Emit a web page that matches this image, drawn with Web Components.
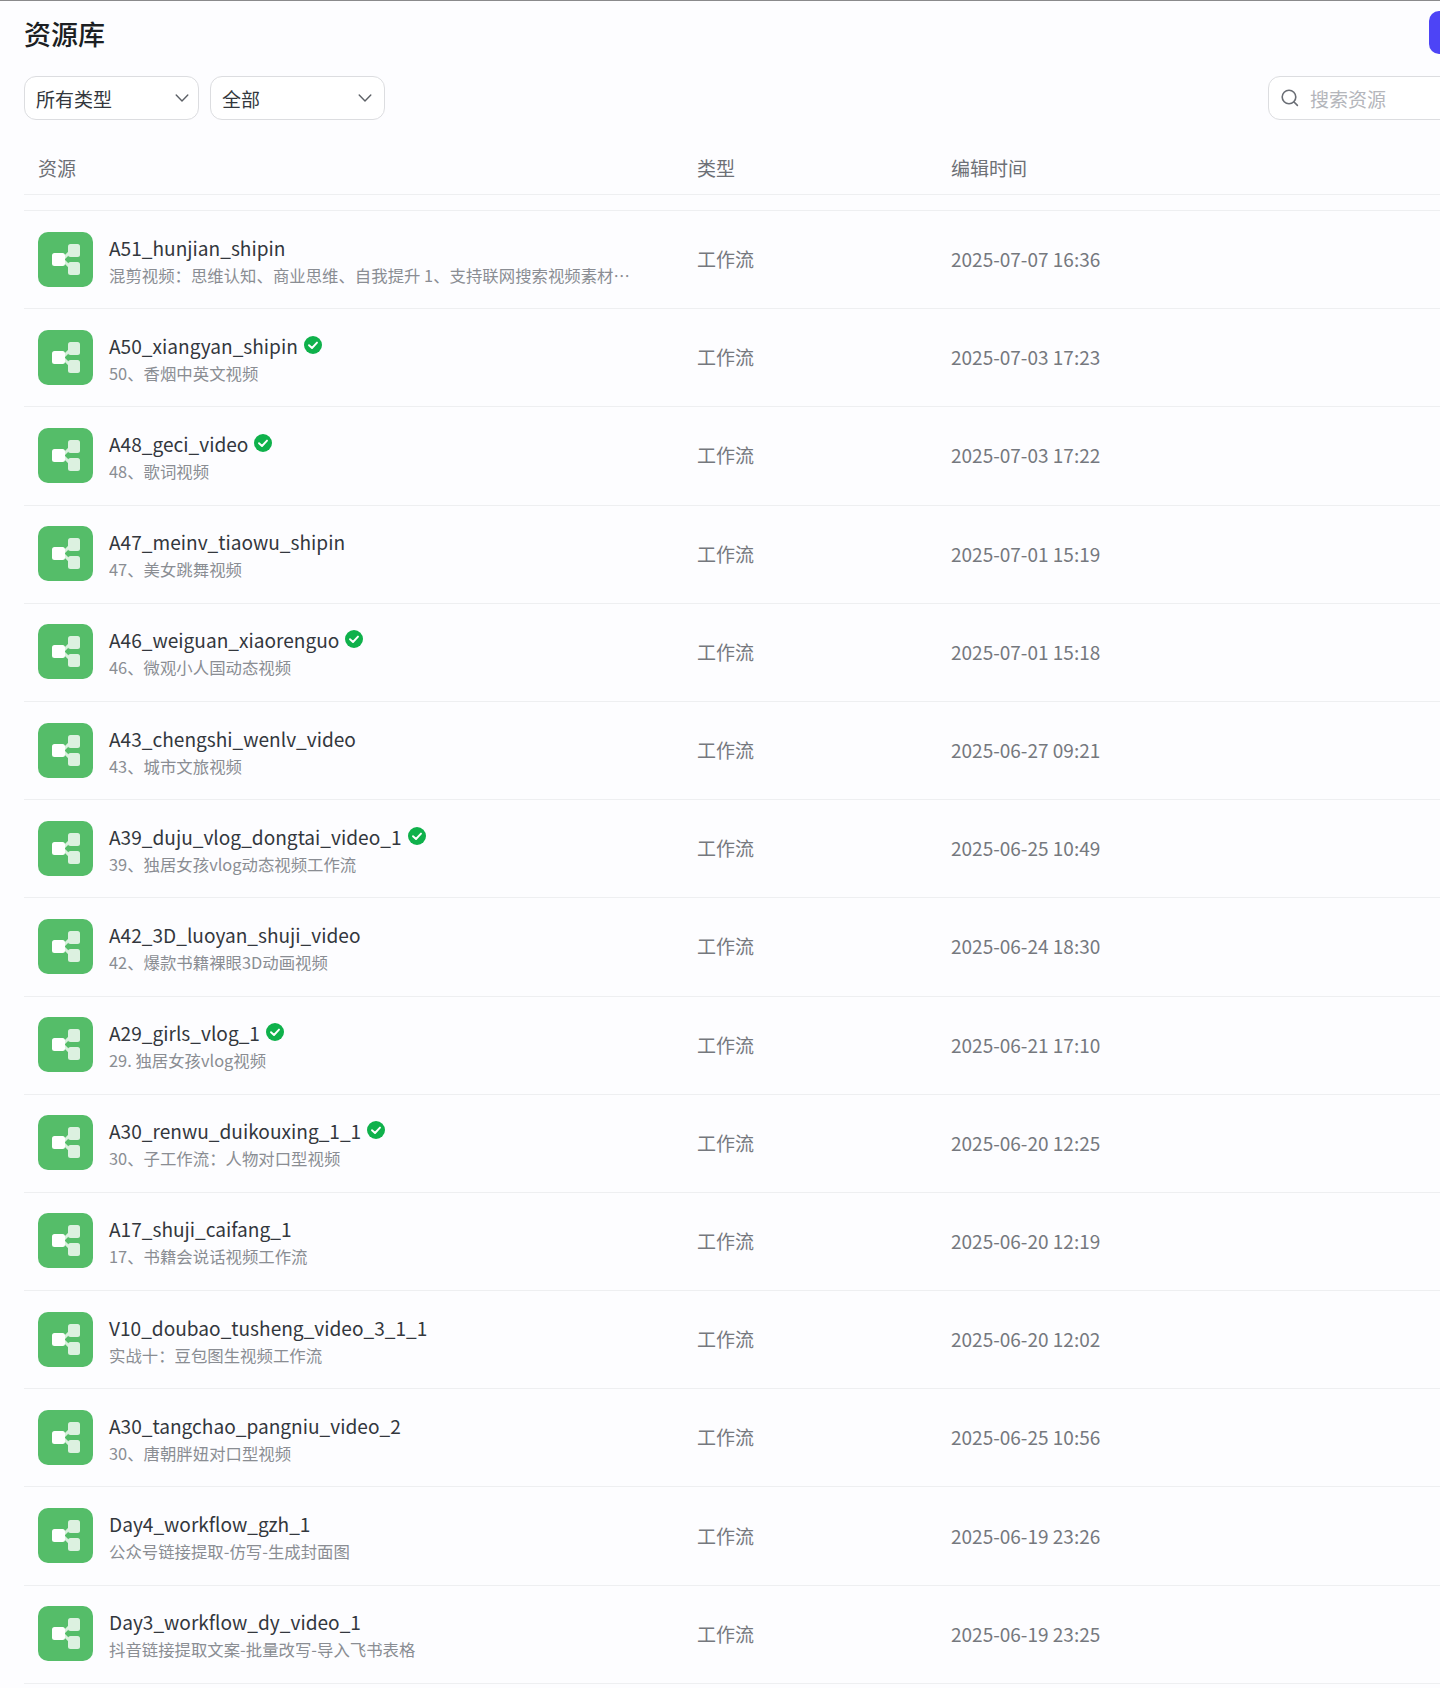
<!DOCTYPE html>
<html lang="zh">
<head>
<meta charset="utf-8">
<title>资源库</title>
<style>
  html, body { margin: 0; padding: 0; background: #fdfdff; }
  body {
    font-family: "Noto Sans CJK SC", "Noto Sans", sans-serif;
    overflow: hidden;
    height: 1688px;
  }
</style>
</head>
<body>
<library-page>
  <span slot="title">资源库</span>
  <library-select slot="filters" style="width:175px;padding-right:9px">所有类型</library-select>
  <library-select slot="filters" style="width:175px;padding-right:12px">全部</library-select>
  <library-search slot="search">搜索资源</library-search>
  <library-table id="table"></library-table>
</library-page>

<script>
class LibraryPage extends HTMLElement {
  constructor() {
    super();
    this.attachShadow({ mode: 'open' });
    this.shadowRoot.innerHTML = `
      <style>
        :host {
          display: block;
          width: 1440px;
          height: 1688px;
          box-sizing: border-box;
          overflow: hidden;
          border-top: 1px solid #8a8a8c;
        }
        .head {
          display: flex;
          justify-content: space-between;
          align-items: flex-start;
          height: 75px;
          padding-left: 24px;
        }
        .title {
          font-size: 27px;
          font-weight: 500;
          line-height: 38px;
          color: #1c1f23;
          margin-top: 14px;
        }
        .create {
          width: 11px;
          height: 43px;
          margin-top: 10px;
          background: #4d44f6;
          border-radius: 10px 0 0 10px;
        }
        .bar {
          display: flex;
          justify-content: space-between;
          padding-left: 24px;
        }
        .filters { display: flex; gap: 11px; }
        .body { padding-left: 24px; }
      </style>
      <div class="head">
        <div class="title"><slot name="title"></slot></div>
        <div class="create"></div>
      </div>
      <div class="bar">
        <div class="filters"><slot name="filters"></slot></div>
        <slot name="search"></slot>
      </div>
      <div class="body"><slot></slot></div>
    `;
  }
}

class LibrarySelect extends HTMLElement {
  constructor() {
    super();
    this.attachShadow({ mode: 'open' });
    this.shadowRoot.innerHTML = `
      <style>
        :host {
          display: flex;
          align-items: center;
          justify-content: space-between;
          box-sizing: border-box;
          height: 44px;
          padding: 0 10px 0 11px;
          background: #fff;
          border: 1px solid #dcdde0;
          border-radius: 12px;
          font-size: 19px;
          color: #33373d;
        }
        svg { display: block; }
      </style>
      <slot></slot>
      <svg width="14" height="14" viewBox="0 0 14 14" fill="none" stroke="#5c6066" stroke-width="1.4" stroke-linecap="round" stroke-linejoin="round">
        <path d="M1.2 4 7 10l5.8-6"/>
      </svg>
    `;
  }
}

class LibrarySearch extends HTMLElement {
  constructor() {
    super();
    this.attachShadow({ mode: 'open' });
    this.shadowRoot.innerHTML = `
      <style>
        :host {
          display: flex;
          align-items: center;
          box-sizing: border-box;
          width: 240px;
          height: 44px;
          margin-right: -68px;
          padding-left: 12px;
          gap: 11px;
          background: #fff;
          border: 1px solid #dcdde0;
          border-radius: 12px;
          font-size: 19px;
          color: #b4b6bb;
        }
        svg { display: block; flex: none; }
      </style>
      <svg width="18" height="18" viewBox="0 0 18 18" fill="none" stroke="#6a6e75" stroke-width="1.6" stroke-linecap="round">
        <circle cx="8" cy="8" r="6.8"/>
        <path d="m13 13 3.4 3.4"/>
      </svg>
      <slot></slot>
    `;
  }
}

class LibraryIcon extends HTMLElement {
  constructor() {
    super();
    this.attachShadow({ mode: 'open' });
    this.shadowRoot.innerHTML = `
      <style>
        :host { display: block; width: 55px; height: 55px; flex: none; margin-top: -1px; }
        svg { display: block; }
      </style>
      <svg width="55" height="55" viewBox="0 0 55 55">
        <rect width="55" height="55" rx="10" fill="#55bd69"/>
        <path d="M26 26 32 20M26 29 32 35" stroke="#d9f0dd" stroke-width="3" fill="none"/>
        <rect x="14" y="21" width="13" height="13" rx="2.5" fill="#fff"/>
        <rect x="30" y="12" width="12" height="13" rx="2.5" fill="#dcf1e0"/>
        <rect x="30" y="30" width="12" height="13" rx="2.5" fill="#dcf1e0"/>
      </svg>
    `;
  }
}

class LibraryRow extends HTMLElement {
  constructor() {
    super();
    this.attachShadow({ mode: 'open' });
    this.shadowRoot.innerHTML = `
      <style>
        :host {
          display: grid;
          grid-template-columns: 659px 254px 1fr;
          align-items: center;
          box-sizing: border-box;
          height: 98.2px;
          padding-left: 14px;
          border-bottom: 1px solid #eeeff1;
        }
        .res { display: flex; align-items: center; gap: 16px; }
        .text { min-width: 0; padding-top: 2px; }
        .name {
          display: flex;
          align-items: center;
          gap: 6px;
          font-size: 19.1px;
          line-height: 26px;
          color: #33373d;
        }
        .desc {
          width: 530px;
          margin-top: 2px;
          font-size: 16.4px;
          line-height: 24px;
          color: #8a8d93;
          white-space: nowrap;
          overflow: hidden;
          text-overflow: ellipsis;
        }
        .check { display: none; margin-top: -2px; }
        :host([verified]) .check { display: block; }
        .cell { font-size: 19px; line-height: 28px; color: #75787e; margin-top: -1px; }
      </style>
      <div class="res">
        <library-icon></library-icon>
        <div class="text">
          <div class="name">
            <slot name="name"></slot>
            <svg class="check" width="18" height="18" viewBox="0 0 18 18">
              <circle cx="9" cy="9" r="9" fill="#0fb14b"/>
              <path d="M5 9.2 8 12l5-5.4" fill="none" stroke="#fff" stroke-width="1.9" stroke-linecap="round" stroke-linejoin="round"/>
            </svg>
          </div>
          <div class="desc"><slot name="desc"></slot></div>
        </div>
      </div>
      <div class="cell"><slot name="type"></slot></div>
      <div class="cell"><slot name="time"></slot></div>
    `;
  }
}

class LibraryTable extends HTMLElement {
  constructor() {
    super();
    this.attachShadow({ mode: 'open' });
    this.shadowRoot.innerHTML = `
      <style>
        :host { display: block; width: 1500px; }
        .header {
          display: grid;
          grid-template-columns: 659px 254px 1fr;
          align-items: center;
          box-sizing: border-box;
          height: 75px;
          padding: 20px 0 0 14px;
          border-bottom: 1px solid #eeeff1;
          font-size: 19px;
          color: #6d7076;
        }
        .rows {
          margin-top: 15px;
          border-top: 1px solid #eeeff1;
        }
      </style>
      <div class="header"><span>资源</span><span>类型</span><span>编辑时间</span></div>
      <div class="rows"><slot></slot></div>
    `;
  }
}

customElements.define('library-page', LibraryPage);
customElements.define('library-select', LibrarySelect);
customElements.define('library-search', LibrarySearch);
customElements.define('library-icon', LibraryIcon);
customElements.define('library-row', LibraryRow);
customElements.define('library-table', LibraryTable);

const rows = [
  ['A51_hunjian_shipin', '混剪视频：思维认知、商业思维、自我提升 1、支持联网搜索视频素材…', '2025-07-07 16:36', false],
  ['A50_xiangyan_shipin', '50、香烟中英文视频', '2025-07-03 17:23', true],
  ['A48_geci_video', '48、歌词视频', '2025-07-03 17:22', true],
  ['A47_meinv_tiaowu_shipin', '47、美女跳舞视频', '2025-07-01 15:19', false],
  ['A46_weiguan_xiaorenguo', '46、微观小人国动态视频', '2025-07-01 15:18', true],
  ['A43_chengshi_wenlv_video', '43、城市文旅视频', '2025-06-27 09:21', false],
  ['A39_duju_vlog_dongtai_video_1', '39、独居女孩vlog动态视频工作流', '2025-06-25 10:49', true],
  ['A42_3D_luoyan_shuji_video', '42、爆款书籍裸眼3D动画视频', '2025-06-24 18:30', false],
  ['A29_girls_vlog_1', '29. 独居女孩vlog视频', '2025-06-21 17:10', true],
  ['A30_renwu_duikouxing_1_1', '30、子工作流：人物对口型视频', '2025-06-20 12:25', true],
  ['A17_shuji_caifang_1', '17、书籍会说话视频工作流', '2025-06-20 12:19', false],
  ['V10_doubao_tusheng_video_3_1_1', '实战十：豆包图生视频工作流', '2025-06-20 12:02', false],
  ['A30_tangchao_pangniu_video_2', '30、唐朝胖妞对口型视频', '2025-06-25 10:56', false],
  ['Day4_workflow_gzh_1', '公众号链接提取-仿写-生成封面图', '2025-06-19 23:26', false],
  ['Day3_workflow_dy_video_1', '抖音链接提取文案-批量改写-导入飞书表格', '2025-06-19 23:25', false]
];

const table = document.getElementById('table');
for (const [name, desc, time, verified] of rows) {
  const row = document.createElement('library-row');
  if (verified) row.setAttribute('verified', '');
  for (const [slot, text] of [['name', name], ['desc', desc], ['type', '工作流'], ['time', time]]) {
    const span = document.createElement('span');
    span.slot = slot;
    span.textContent = text;
    row.appendChild(span);
  }
  table.appendChild(row);
}
</script>
</body>
</html>
